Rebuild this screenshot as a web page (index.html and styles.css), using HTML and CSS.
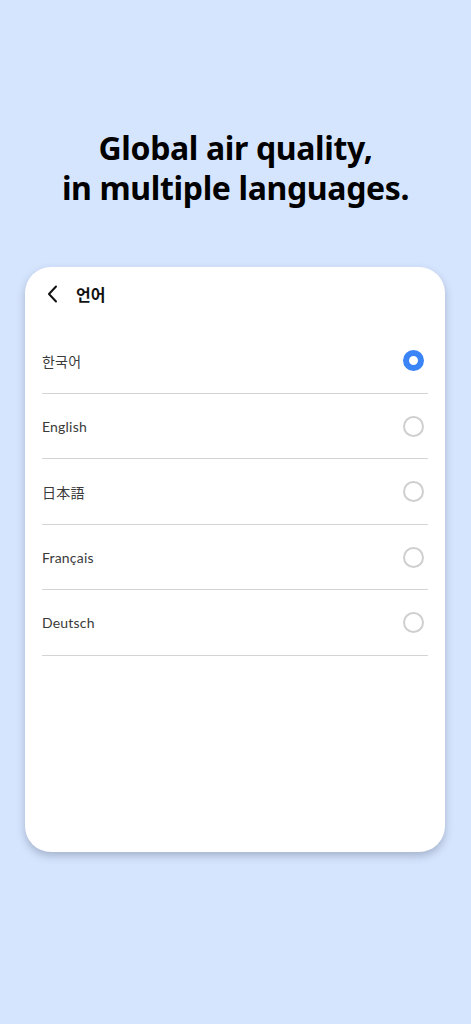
FILE: index.html
```html
<!DOCTYPE html>
<html lang="en">
<head>
    <meta charset="UTF-8">
    <meta name="viewport" content="width=device-width, initial-scale=1.0">
    <title>Languages</title>
    <link rel="stylesheet" href="styles.css">
</head>
<body>
    <h1 class="headline">Global air quality,<br>in multiple languages.</h1>

    <div class="card">
        <div class="card-header">
            <svg class="back" width="14" height="18" viewBox="0 0 14 18">
                <path d="M10 1.5 L3 9 L10 16.5" fill="none" stroke="#111" stroke-width="2" stroke-linecap="round" stroke-linejoin="round"/>
            </svg>
            <span class="card-title">언어</span>
        </div>
        <ul class="lang-list">
            <li class="lang-item"><span class="lang-name">한국어</span><span class="radio checked"></span></li>
            <li class="lang-item"><span class="lang-name">English</span><span class="radio"></span></li>
            <li class="lang-item"><span class="lang-name">日本語</span><span class="radio"></span></li>
            <li class="lang-item"><span class="lang-name">Français</span><span class="radio"></span></li>
            <li class="lang-item"><span class="lang-name">Deutsch</span><span class="radio"></span></li>
        </ul>
    </div>
</body>
</html>
```

FILE: styles.css
```css
body {
    margin: 0;
    padding: 0;
    background: #d6e5fe;
    font-family: "Noto Sans", "Noto Sans CJK KR", sans-serif;
    display: flex;
    flex-direction: column;
    align-items: center;
    height: 1024px;
}

.headline {
    margin: 128px 0 0;
    font-size: 32px;
    line-height: 40px;
    font-weight: 700;
    letter-spacing: -0.35px;
    text-align: center;
    color: #000;
}

.card {
    margin-top: 59px;
    margin-right: 1px;
    width: 420px;
    height: 585px;
    box-sizing: border-box;
    background: #fff;
    border-radius: 26px;
    box-shadow: 0 4px 8px rgba(40, 50, 80, 0.28);
    padding: 0 17px;
}

.card-header {
    height: 61px;
    box-sizing: border-box;
    padding: 0 0 7px 4px;
    display: flex;
    align-items: center;
    gap: 16px;
}

.back {
    display: block;
}

.card-title {
    font-family: "Noto Sans CJK KR", sans-serif;
    font-size: 16px;
    font-weight: 700;
    color: #111;
}

.lang-list {
    list-style: none;
    margin: 0;
    padding: 0;
}

.lang-item {
    height: 64px;
    border-bottom: 1px solid #d4d4d4;
    display: flex;
    align-items: center;
    justify-content: space-between;
    padding: 0 4px 0 0;
    margin-top: 0.5px;
}

.lang-name {
    font-family: Lato, "Noto Sans CJK JP", sans-serif;
    font-size: 14px;
    color: #3a3a3a;
    letter-spacing: 0.2px;
}

.radio {
    width: 21px;
    height: 21px;
    box-sizing: border-box;
    border: 2px solid #cfcfcf;
    border-radius: 50%;
}

.radio.checked {
    border: 6.5px solid #3a84f8;
    background: #fff;
}
```
